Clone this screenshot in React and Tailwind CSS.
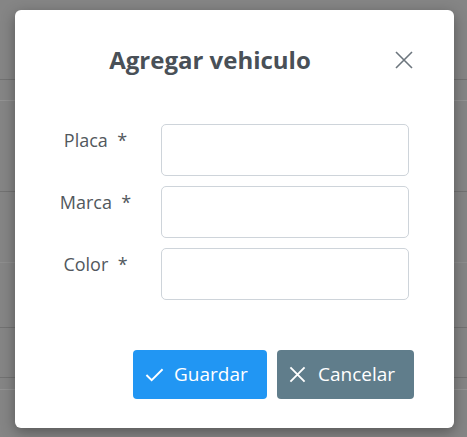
import React from 'react'

const rows = [
  { h: 'h-[80px]', line: 'border-[#727272]' },
  { h: 'h-[21px]', line: 'border-[#939393]' },
  { h: 'h-[91px]', line: 'border-[#727272]' },
  { h: 'h-[71px]', line: 'border-[#8e8e8e]' },
  { h: 'h-[65px]', line: 'border-[#727272]' },
  { h: 'h-[50px]', line: 'border-[#727272]' },
  { h: 'h-[12px]', line: 'border-[#939393]' },
]

function Field({ label }) {
  return (
    <>
      <label className="pt-[3px] text-center text-[18px] text-[#52585d]">
        {label}&nbsp;&nbsp;*
      </label>
      <input
        type="text"
        className="h-[52px] w-[248px] rounded-[5px] border border-[#ced4da] bg-white outline-none"
      />
    </>
  )
}

export default function App() {
  return (
    <div
      className="relative h-[437px] w-[467px] overflow-hidden bg-[#858585]"
      style={{ fontFamily: '"Open Sans", "Noto Sans", sans-serif' }}
    >
      {/* faded table behind the overlay */}
      <div className="flex flex-col">
        {rows.map((r, i) => (
          <div key={i} className={`${r.h} border-b ${r.line}`} />
        ))}
      </div>

      <div className="absolute left-[15px] top-[10px] flex h-[418px] w-[439px] flex-col rounded-[6px] bg-white shadow-[0_4px_14px_rgba(0,0,0,0.35)]">
        <div className="flex items-center pl-[17px] pr-[34px] pt-[33px]">
          <h2 className="flex-1 text-center text-[24px] leading-[33px] font-bold text-[#495057]">
            Agregar vehiculo
          </h2>
          <button className="flex h-[32px] w-[32px] items-center justify-center text-[#6c757d]">
            <svg width="18" height="18" viewBox="0 0 18 18" fill="none" stroke="currentColor" strokeWidth="1.6">
              <path d="M1 1L17 17M17 1L1 17" />
            </svg>
          </button>
        </div>

        <div className="mt-[48px] grid grid-cols-[113px_248px] gap-x-[9px] gap-y-[10px] pl-[24px]">
          <Field label="Placa" />
          <Field label="Marca" />
          <Field label="Color" />
        </div>

        <div className="mt-auto mb-[29px] flex justify-end gap-[10px] pr-[40px]">
          <button className="flex h-[49px] w-[134px] items-center gap-[10px] rounded-[4px] bg-[#2196f3] pl-[12px] text-[19px] text-white">
            <svg width="19" height="19" viewBox="0 0 20 20" fill="none" stroke="currentColor" strokeWidth="2">
              <path d="M1.5 10.5L7 16L18.5 4.5" />
            </svg>
            Guardar
          </button>
          <button className="flex h-[49px] w-[137px] items-center gap-[12px] rounded-[4px] bg-[#607d8b] pl-[12px] text-[19px] text-white">
            <svg width="17" height="17" viewBox="0 0 18 18" fill="none" stroke="currentColor" strokeWidth="2">
              <path d="M1.5 1.5L16.5 16.5M16.5 1.5L1.5 16.5" />
            </svg>
            Cancelar
          </button>
        </div>
      </div>
    </div>
  )
}
